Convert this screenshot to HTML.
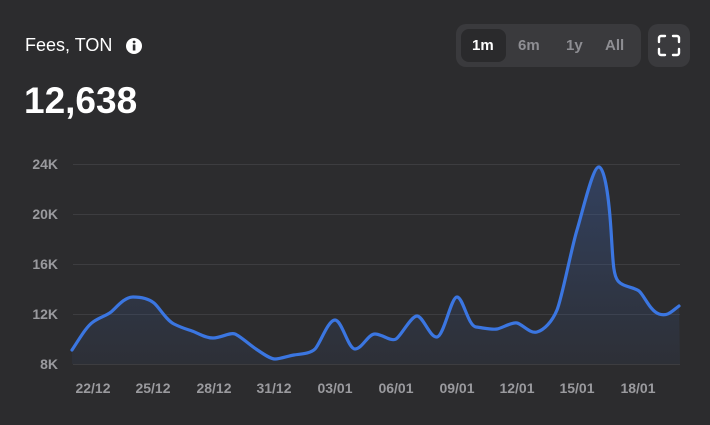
<!DOCTYPE html>
<html><head><style>
body{margin:0;width:710px;height:425px;background:#2c2c2e;font-family:"Liberation Sans",sans-serif;overflow:hidden;position:relative}
.t{position:absolute;left:25px;top:35px;font-size:18px;color:#fff}
.v{position:absolute;left:24px;top:80px;font-size:37px;color:#fff;font-weight:bold}
.grp{position:absolute;left:456px;top:24px;width:185px;height:43px;background:#3a3a3d;border-radius:10px}
.b{position:absolute;top:13px;font-size:15px;font-weight:bold;color:#8e8e93}
.act{position:absolute;left:5px;top:5px;width:45px;height:33px;background:#2a2a2c;border-radius:8px}
.fs{position:absolute;left:648px;top:24px;width:42px;height:43px;background:#3a3a3d;border-radius:10px}
</style></head><body>
<div class="t">Fees, TON</div>
<svg style="position:absolute;left:125px;top:37px" width="18" height="18"><circle cx="9" cy="9" r="8" fill="#fff"/><rect x="7.8" y="7.5" width="2.6" height="6" fill="#2c2c2e"/><circle cx="9.1" cy="5" r="1.4" fill="#2c2c2e"/></svg>
<div class="v">12,638</div>
<div class="grp"><div class="act"></div>
<span class="b" style="left:16px;color:#fff">1m</span>
<span class="b" style="left:62px">6m</span>
<span class="b" style="left:110px">1y</span>
<span class="b" style="left:149px">All</span></div>
<div class="fs"><svg width="42" height="43" viewBox="0 0 42 43"><path d="M11 18v-4a2 2 0 0 1 2-2h4M25 12h4a2 2 0 0 1 2 2v4M31 25v4a2 2 0 0 1-2 2h-4M17 31h-4a2 2 0 0 1-2-2v-4" stroke="#fff" stroke-width="2.4" fill="none" stroke-linecap="round"/></svg></div>
<svg style="position:absolute;left:0;top:0" width="710" height="425">
<defs><linearGradient id="g" x1="0" y1="0" x2="0" y2="1"><stop offset="0" stop-color="#3a5a9a" stop-opacity=".45"/><stop offset="1" stop-color="#3a5a9a" stop-opacity=".08"/></linearGradient></defs>
<g stroke="#3d3d40" stroke-width="1"><line x1="73" y1="164.5" x2="680" y2="164.5"/><line x1="73" y1="214.5" x2="680" y2="214.5"/><line x1="73" y1="264.5" x2="680" y2="264.5"/><line x1="73" y1="314.5" x2="680" y2="314.5"/><line x1="73" y1="364.5" x2="680" y2="364.5"/></g>
<g font-size="14" fill="#9a9a9e" font-weight="bold" text-anchor="end"><text x="58" y="169">24K</text><text x="58" y="219">20K</text><text x="58" y="269">16K</text><text x="58" y="319">12K</text><text x="58" y="369">8K</text></g>
<g font-size="14" fill="#9a9a9e" font-weight="bold" text-anchor="middle"><text x="93" y="393">22/12</text><text x="153" y="393">25/12</text><text x="214" y="393">28/12</text><text x="274" y="393">31/12</text><text x="335" y="393">03/01</text><text x="396" y="393">06/01</text><text x="457" y="393">09/01</text><text x="517" y="393">12/01</text><text x="577" y="393">15/01</text><text x="638" y="393">18/01</text></g>
<path fill="url(#g)" d="M72,350 C80,338 86,327 93,322 S106,316 111,312 S124,297 133,297 S149,299 154,303 S166,320 174,324 S186,329 192,331 S205,338 213,338 S230,332 235,334 S250,345 256,349 S270,359 275,359 S288,356 294,355 S310,354 315,349 S328,320 335,320 S348,349 355,349 S368,334 375,334 S391,342 396,339 S411,316 417,316 S430,338 437,337 S451,297 457,297 S468,326 476,327 S492,330 497,329 S512,322 517,323 S530,334 537,332 S552,322 557,310 S571,250 577,230 S593,166 599,167 S609,200 611,230 S613,275 618,281 S634,287 639,291 S650,311 659,314 S672,311 679,306 L680,364 L72,364 Z"/>
<path fill="none" stroke="#3b76e1" stroke-width="3.2" stroke-linejoin="round" stroke-linecap="round" d="M72,350 C80,338 86,327 93,322 S106,316 111,312 S124,297 133,297 S149,299 154,303 S166,320 174,324 S186,329 192,331 S205,338 213,338 S230,332 235,334 S250,345 256,349 S270,359 275,359 S288,356 294,355 S310,354 315,349 S328,320 335,320 S348,349 355,349 S368,334 375,334 S391,342 396,339 S411,316 417,316 S430,338 437,337 S451,297 457,297 S468,326 476,327 S492,330 497,329 S512,322 517,323 S530,334 537,332 S552,322 557,310 S571,250 577,230 S593,166 599,167 S609,200 611,230 S613,275 618,281 S634,287 639,291 S650,311 659,314 S672,311 679,306"/>
</svg>
</body></html>
